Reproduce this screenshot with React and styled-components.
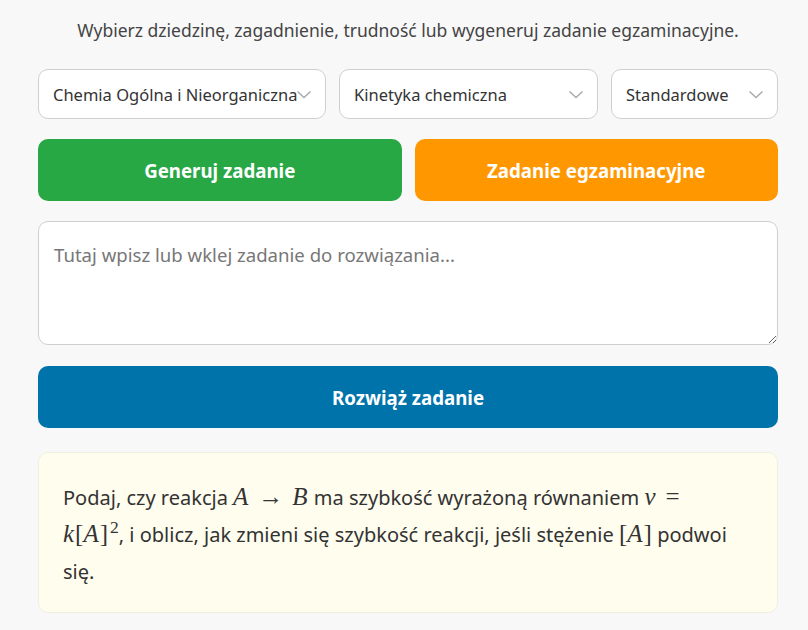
import React from "react";
import styled, { createGlobalStyle } from "styled-components";

const GlobalStyle = createGlobalStyle`
  html, body {
    margin: 0;
    padding: 0;
    background: #f8f8f8;
  }
  body {
    font-family: "Noto Sans", "Open Sans", sans-serif;
    color: #333;
  }
`;

const Page = styled.div`
  width: 740px;
  margin: 0 0 0 38px;
  padding: 18px 0 0 0;
  display: flex;
  flex-direction: column;
`;

const Intro = styled.p`
  margin: 0 0 27px 0;
  text-align: center;
  font-size: 17.5px;
  color: #444;
  line-height: 24px;
`;

const SelectRow = styled.div`
  display: flex;
  gap: 13px;
  margin-bottom: 20px;
`;

const SelectBox = styled.div`
  position: relative;
  width: ${({ $w }) => $w}px;
  height: 50px;
  box-sizing: border-box;
  background: #fff;
  border: 1px solid #cfcfcf;
  border-radius: 10px;
  display: flex;
  align-items: center;
  padding: 0 14px;
  font-size: 16.5px;
  color: #333;
  white-space: nowrap;
  overflow: hidden;
`;

const Chevron = styled.svg`
  position: absolute;
  right: 12px;
  top: 50%;
  transform: translateY(-50%);
  width: 18px;
  height: 18px;
`;

const ButtonRow = styled.div`
  display: flex;
  gap: 13px;
  margin-bottom: 20px;
`;

const ActionButton = styled.button`
  flex: 1;
  height: 62px;
  border: none;
  border-radius: 10px;
  background: ${({ $bg }) => $bg};
  color: #fff;
  font-family: inherit;
  font-weight: 700;
  font-size: 18.7px;
  cursor: pointer;
`;

const TaskInput = styled.textarea`
  display: block;
  width: 100%;
  height: 124px;
  box-sizing: border-box;
  border: 1px solid #cfcfcf;
  border-radius: 10px;
  background: #fff;
  padding: 20px 15px;
  font-family: inherit;
  font-size: 18.6px;
  line-height: 26px;
  color: #333;
  margin: 0 0 21px 0;
  resize: vertical;
  &::placeholder {
    color: #777;
  }
`;

const SolveButton = styled(ActionButton)`
  flex: none;
  width: 100%;
  margin-bottom: 24px;
`;

const ResultBox = styled.div`
  background: #fffdee;
  border: 1px solid #f1efe2;
  border-radius: 10px;
  padding: 26px 36px 22px 24px;
  font-size: 20px;
  line-height: 37px;
  color: #333;
`;

const Math = styled.span`
  font-family: "Liberation Serif", "DejaVu Serif", serif;
  font-size: 1.25em;
  line-height: 0;
  white-space: nowrap;
`;

const Var = styled.i`
  font-style: italic;
  padding-right: 0.04em;
`;

const Op = styled.span`
  margin: 0 0.36em;
`;

const Rel = styled.span`
  margin-left: 0.36em;
`;

const Sup = styled.sup`
  font-size: 0.7em;
  line-height: 0;
  margin-left: 2px;
`;

const ChevronIcon = () => (
  <Chevron viewBox="0 0 18 18">
    <path d="M2.5 6.5 L9 12.5 L15.5 6.5" fill="none" stroke="#aaa" strokeWidth="1.5" />
  </Chevron>
);

export default function App() {
  return (
    <>
      <GlobalStyle />
      <Page>
        <Intro>
          Wybierz dziedzinę, zagadnienie, trudność lub wygeneruj zadanie
          egzaminacyjne.
        </Intro>
        <SelectRow>
          <SelectBox $w={288}>
            Chemia Ogólna i Nieorganiczna
            <ChevronIcon />
          </SelectBox>
          <SelectBox $w={259}>
            Kinetyka chemiczna
            <ChevronIcon />
          </SelectBox>
          <SelectBox $w={167}>
            Standardowe
            <ChevronIcon />
          </SelectBox>
        </SelectRow>
        <ButtonRow>
          <ActionButton $bg="#28a745">Generuj zadanie</ActionButton>
          <ActionButton $bg="#ff9800">Zadanie egzaminacyjne</ActionButton>
        </ButtonRow>
        <TaskInput placeholder="Tutaj wpisz lub wklej zadanie do rozwiązania..." />
        <SolveButton $bg="#0073aa">Rozwiąż zadanie</SolveButton>
        <ResultBox>
          Podaj, czy reakcja{" "}
          <Math>
            <Var>A</Var>
            <Op>→</Op>
            <Var>B</Var>
          </Math>{" "}
          ma szybkość wyrażoną równaniem{" "}
          <Math>
            <Var>v</Var>
            <Rel>=</Rel>
          </Math>{" "}
          <Math>
            <Var>k</Var>[<Var>A</Var>]<Sup>2</Sup>
          </Math>
          , i oblicz, jak zmieni się szybkość reakcji, jeśli stężenie{" "}
          <Math>
            [<Var>A</Var>]
          </Math>{" "}
          podwoi się.
        </ResultBox>
      </Page>
    </>
  );
}
